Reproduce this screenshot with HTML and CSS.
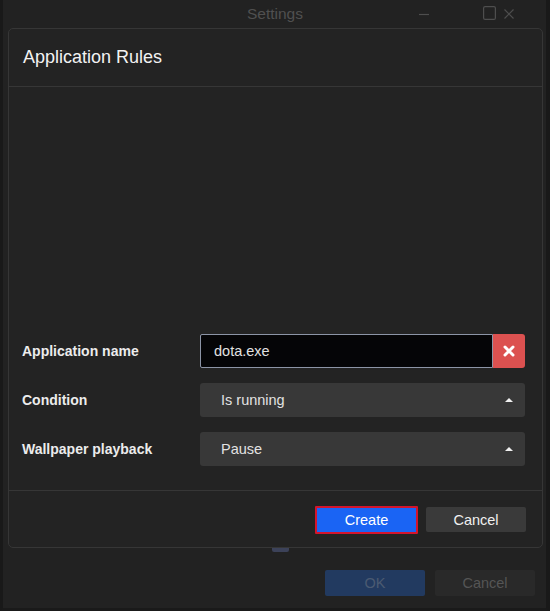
FILE: index.html
```html
<!DOCTYPE html>
<html lang="en">
<head>
    <meta charset="UTF-8">
    <meta name="viewport" content="width=device-width, initial-scale=1.0">
    <title>Settings</title>
    <link rel="stylesheet" href="styles.css">
</head>
<body>

<div class="window">
    <div class="titlebar">
        <span></span>
        <span class="title">Settings</span>
        <div class="controls">
            <svg class="ctl-min" width="10" height="12" viewBox="0 0 10 12"><line x1="0" y1="6.5" x2="10" y2="6.5" stroke="#4e4e4e" stroke-width="1.2"/></svg>
            <svg class="ctl-max" width="13" height="14" viewBox="0 0 13 14"><rect x="0.6" y="0.6" width="11.8" height="12.8" rx="1.5" fill="none" stroke="#4e4e4e" stroke-width="1.2"/></svg>
            <svg class="ctl-close" width="10" height="10" viewBox="0 0 10 10"><path d="M0.5 0.5 L9.5 9.5 M9.5 0.5 L0.5 9.5" stroke="#4e4e4e" stroke-width="1.2"/></svg>
        </div>
    </div>

    <!-- Rule dialog -->
    <div class="dialog">
        <div class="dialog-header">Application Rules</div>
        <div class="dialog-body">
            <div class="form-row">
                <label for="appName">Application name</label>
                <div class="field-group">
                    <input type="text" id="appName" class="text-input" value="dota.exe">
                    <button class="clear-button">
                        <svg width="12" height="12" viewBox="0 0 12 12"><path d="M2 2 L10 10 M10 2 L2 10" stroke="#fff" stroke-width="3" stroke-linecap="round"/></svg>
                    </button>
                </div>
            </div>
            <div class="form-row">
                <label>Condition</label>
                <div class="select">
                    <span>Is running</span>
                    <span class="caret"></span>
                </div>
            </div>
            <div class="form-row">
                <label>Wallpaper playback</label>
                <div class="select">
                    <span>Pause</span>
                    <span class="caret"></span>
                </div>
            </div>
        </div>
        <div class="dialog-footer">
            <button class="btn btn-create">Create</button>
            <button class="btn btn-cancel">Cancel</button>
        </div>
    </div>

    <div class="hidden-check"></div>

    <div class="window-footer">
        <button class="btn btn-ok">OK</button>
        <button class="btn btn-dim">Cancel</button>
    </div>
</div>

</body>
</html>
```

FILE: styles.css
```css
body {
    margin: 0;
    background-color: #222222;
    font-family: "Liberation Sans", Arial, sans-serif;
}
.window {
    height: 611px;
    box-sizing: border-box;
    display: flex;
    flex-direction: column;
    border-left: 3px solid #191919;
    border-right: 4px solid #191919;
    border-bottom: 3px solid #1a1a1a;
    background-color: #222222;
}
.titlebar {
    height: 27px;
    display: grid;
    grid-template-columns: 1fr auto 1fr;
    align-items: center;
}
.title {
    color: #505050;
    font-size: 15.5px;
    padding-left: 1px;
}
.controls {
    display: flex;
    align-items: center;
    justify-content: flex-end;
    padding-right: 32px;
}
.ctl-min {
    margin-right: 54px;
}
.ctl-max {
    margin-right: 8px;
    margin-top: -2px;
}
.dialog {
    margin: 1px 3px 0 5px;
    height: 520px;
    box-sizing: border-box;
    border: 1px solid #363636;
    border-radius: 5px;
    background-color: #232323;
    display: flex;
    flex-direction: column;
}
.dialog-header {
    height: 57px;
    border-bottom: 1px solid #363636;
    display: flex;
    align-items: center;
    padding-left: 14px;
    color: #f2f2f2;
    font-size: 18px;
}
.dialog-body {
    flex: 1;
    display: flex;
    flex-direction: column;
    justify-content: flex-end;
    gap: 15px;
    padding: 0 17px 24px 13px;
}
.form-row {
    display: flex;
    align-items: center;
    height: 34px;
}
.form-row label {
    width: 178px;
    color: #ececec;
    font-weight: bold;
    font-size: 14px;
}
.field-group {
    flex: 1;
    display: flex;
    height: 34px;
}
.text-input {
    flex: 1;
    min-width: 0;
    box-sizing: border-box;
    height: 34px;
    background-color: #050507;
    border: 1px solid #8c94a6;
    border-radius: 2px 0 0 2px;
    color: #e2e2e2;
    font-family: inherit;
    font-size: 14.5px;
    padding: 0 13px;
    outline: none;
}
.clear-button {
    width: 32px;
    height: 34px;
    border: none;
    background-color: #dc5150;
    border-radius: 0 3px 3px 0;
    display: flex;
    align-items: center;
    justify-content: center;
    padding: 0;
}
.select {
    flex: 1;
    height: 34px;
    background-color: #383838;
    border-radius: 3px;
    display: flex;
    align-items: center;
    justify-content: space-between;
    padding: 0 12px 0 21px;
    color: #e2e2e2;
    font-size: 14.5px;
}
.caret {
    width: 0;
    height: 0;
    border-left: 4px solid transparent;
    border-right: 4px solid transparent;
    border-bottom: 4px solid #f0f0f0;
}
.dialog-footer {
    height: 56px;
    border-top: 1px solid #363636;
    display: flex;
    align-items: center;
    justify-content: flex-end;
    gap: 8px;
    padding-right: 16px;
}
.btn {
    height: 26px;
    width: 100px;
    border: none;
    border-radius: 2px;
    font-family: inherit;
    font-size: 14.5px;
    cursor: pointer;
}
.btn-create {
    width: 103px;
    height: 28px;
    background-color: #1a64f4;
    color: #ffffff;
    border: 2px solid #d4142c;
    border-radius: 1px;
    margin-top: 1px;
}
.btn-cancel {
    height: 25px;
    background-color: #3a3a3a;
    color: #f0f0f0;
    margin-top: 1px;
}
.hidden-check {
    width: 17px;
    height: 4px;
    margin: 0 0 0 269px;
    background-color: #3c4259;
    border-radius: 0 0 2px 2px;
}
.window-footer {
    display: flex;
    justify-content: flex-end;
    gap: 10px;
    padding: 18px 11px 0 0;
}
.btn-ok {
    background-color: #223a60;
    color: #4b5a72;
}
.btn-dim {
    background-color: #292929;
    color: #555555;
}
```
